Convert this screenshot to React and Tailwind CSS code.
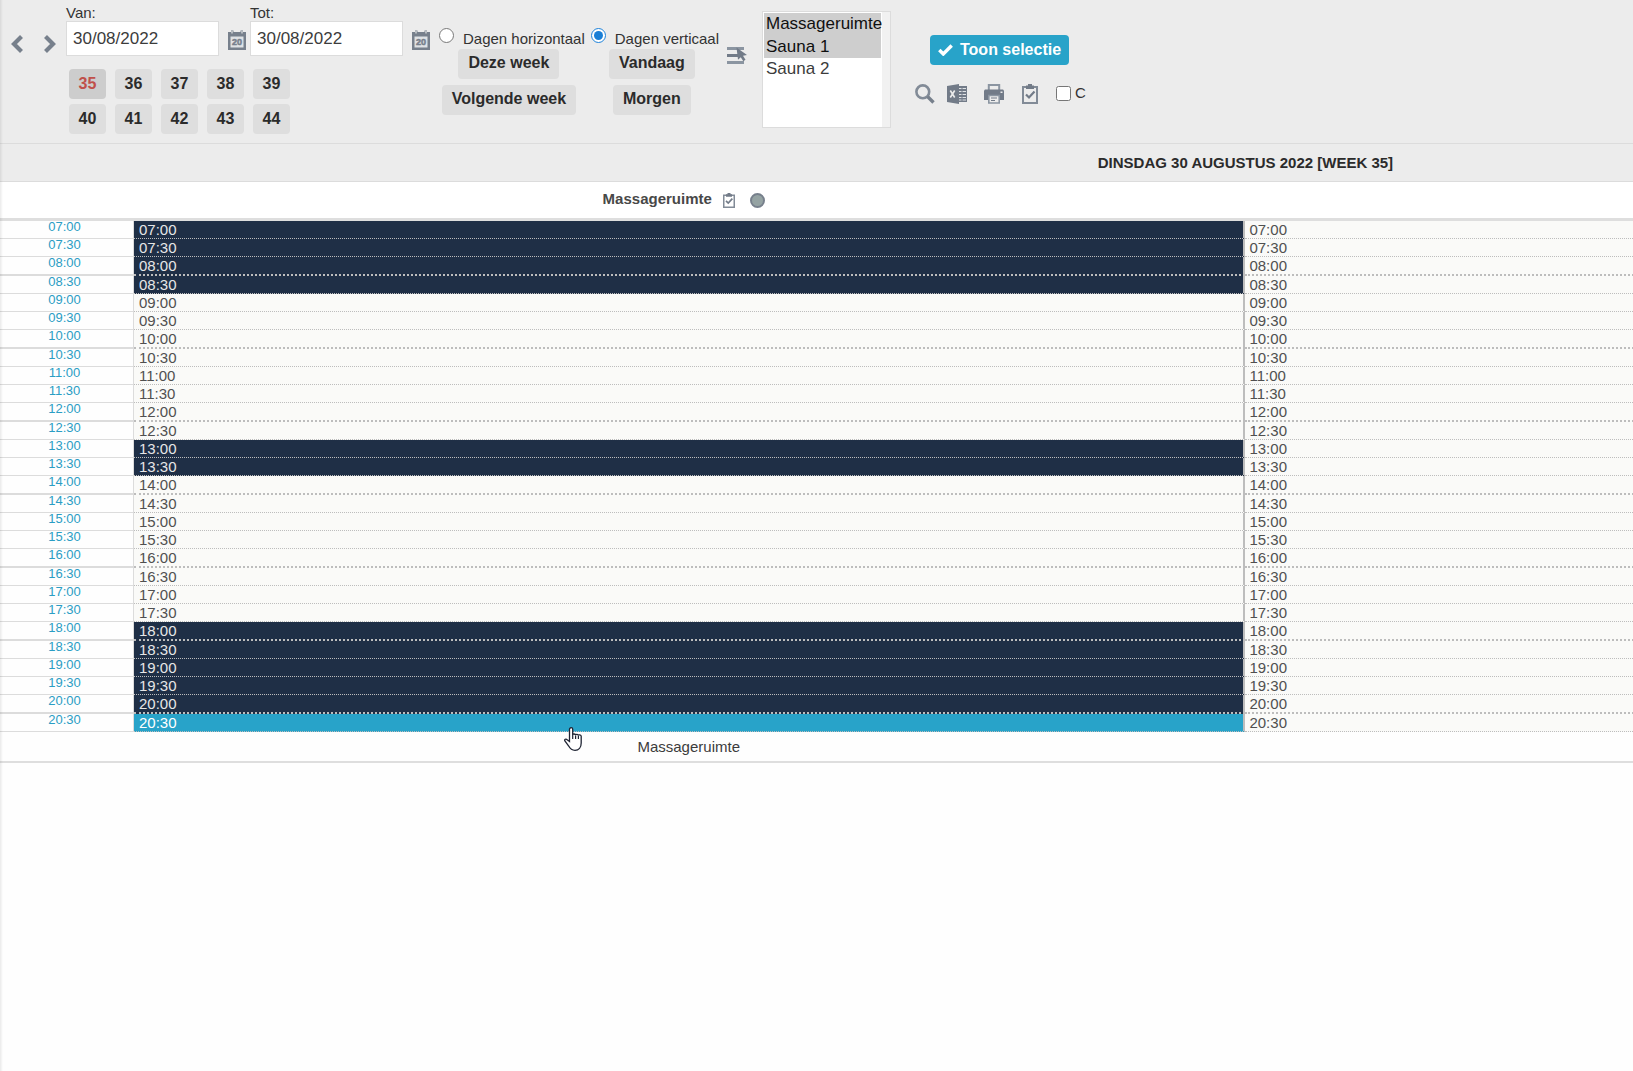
import React from "react";

const SLOTS = Array.from({ length: 28 }, (_, i) => {
  const hour = String(7 + Math.floor(i / 2)).padStart(2, "0");
  return `${hour}:${i % 2 ? "30" : "00"}`;
});
const CLOSED = new Set([0, 1, 2, 3, 12, 13, 22, 23, 24, 25, 26]);
const HOVERED = 27;
const WEEKS = [35, 36, 37, 38, 39, 40, 41, 42, 43, 44];

function Chevron({ flip }) {
  return (
    <svg viewBox="0 0 12 18" className="h-[18px] w-3" fill="none" stroke="#77808c" strokeWidth="4.2">
      <path d={flip ? "M1.5 1.5 9 9l-7.5 7.5" : "M10.5 1.5 3 9l7.5 7.5"} />
    </svg>
  );
}

function CalendarIcon() {
  return (
    <svg viewBox="0 0 18 20" className="h-5 w-[18px]">
      <path fill="#77808c" d="M0 2h3V.5h2.500V2h7V.5H15V2h3v18H0z" />
      <path fill="#ececec" d="M3 1h2v2.500H3zM13 1h2v2.500h-2z" opacity=".55" />
      <path fill="#dfe2e5" d="M2.500 6.500h13v11h-13z" />
      <text
        x="9"
        y="15.3"
        textAnchor="middle"
        fontSize="9"
        fontWeight="700"
        fill="#77808c"
        stroke="#77808c"
        strokeWidth=".5"
        fontFamily="Liberation Sans"
      >
        20
      </text>
    </svg>
  );
}

function ListIcon() {
  return (
    <svg viewBox="0 0 20 19" className="h-[19px] w-5">
      <path fill="#8b95a1" d="M0 1h17v3H0zM0 15h17v3H0z" />
      <path fill="#727b88" d="M0 8h12v3H0z" />
      <path fill="#727b88" d="M9.500 1.500 20 9l-4 .8 2.500 4-2.200 1.400-2.500-4-2.800 2.600z" />
    </svg>
  );
}

function SearchIcon() {
  return (
    <svg viewBox="0 0 20 20" className="size-5" fill="none">
      <circle cx="7.800" cy="7.800" r="6.400" stroke="#828b97" strokeWidth="2.600" />
      <path d="m12.500 12.500 6 6" stroke="#77808c" strokeWidth="3.400" />
    </svg>
  );
}

function ExcelIcon() {
  return (
    <svg viewBox="0 0 20 20" className="size-5">
      <path fill="#727b88" d="M0 2 12 0v20L0 18z" />
      <path fill="#727b88" d="M12 2h8v16h-8z" />
      <path
        stroke="#dfe2e5"
        fill="none"
        d="M12 4.500h2.500M15.500 4.500H19M12 7.500h2.500M15.500 7.500H19M12 10.500h2.500M15.500 10.500H19M12 13.500h2.500M15.500 13.500H19M12 16h2.500M15.500 16H19"
      />
      <path d="m3.300 6.500 4.400 7m0-7-4.400 7" stroke="#ececec" strokeWidth="1.600" />
    </svg>
  );
}

function PrintIcon() {
  return (
    <svg viewBox="0 0 20 20" className="size-5">
      <path d="M4.800 6V1h10.400v5" fill="none" stroke="#8b95a1" strokeWidth="2" />
      <path fill="#727b88" d="M1 5.500h18l1 1V16H0V6.500z" />
      <path fill="#ececec" stroke="#8b95a1" strokeWidth="1.600" d="M4.800 11.500h10.400V19H4.800z" />
      <path d="M7 14h6M7 16.500h4" stroke="#727b88" strokeWidth="1.200" />
      <path fill="#ececec" d="M16.500 7.500h2v1.500h-2z" />
    </svg>
  );
}

function ClipboardIcon({ className }) {
  return (
    <svg viewBox="0 0 16 20" className={className}>
      <path d="M1 3h14v16H1z" fill="none" stroke="#828b97" strokeWidth="2" />
      <path fill="#727b88" d="M4 1.500h2V0h4v1.500h2V5H4z" />
      <path d="m4 10.500 3 3 5.500-6" fill="none" stroke="#727b88" strokeWidth="2.200" />
    </svg>
  );
}

function IconButton({ label, children, className = "" }) {
  return (
    <button type="button" aria-label={label} className={`block shrink-0 cursor-pointer ${className}`}>
      {children}
    </button>
  );
}

function DateField({ id, label }) {
  return (
    <div className="flex items-end">
      <div>
        <label htmlFor={id} className="block text-[15px] leading-4">
          {label}
        </label>
        <input
          id={id}
          defaultValue="30/08/2022"
          className="block h-[35px] w-[153px] border border-[#dcdcdc] bg-white px-1.5 text-[17px] text-[#3c3c3c]"
        />
      </div>
      <IconButton label={`Kalender ${label}`} className="mb-1.5 ml-[9px]">
        <CalendarIcon />
      </IconButton>
    </div>
  );
}

function GreyButton({ children, active, className = "px-2.5 pb-0.5" }) {
  const colours = active ? "bg-[#cdcdcd] text-[#c0504a]" : "bg-[#dedede] text-[#2b2b2b]";
  return (
    <button type="button" className={`h-[30px] rounded text-base font-bold ${colours} ${className}`}>
      {children}
    </button>
  );
}

function ViewOption({ label, checked, children }) {
  return (
    <div>
      <label className="flex h-[21px] items-start gap-[9px] text-[15px]">
        <input type="radio" name="view" defaultChecked={checked} className="size-[15px] accent-[#1a7fd6]" />
        <span className="pt-0.5 leading-[18px] whitespace-nowrap">{label}</span>
      </label>
      <div className="flex flex-col items-center gap-1.5 pr-1.5">{children}</div>
    </div>
  );
}

function Toolbar() {
  return (
    <header className="flex items-start border-b border-[#dcdcdc] bg-[#ececec] pb-[9px]">
      <div className="flex w-[66px] shrink-0 gap-[21px] pt-[35px] pl-[11px]">
        <IconButton label="Vorige">
          <Chevron />
        </IconButton>
        <IconButton label="Volgende">
          <Chevron flip />
        </IconButton>
      </div>
      <div className="shrink-0 pt-[5px]">
        <div className="flex gap-1">
          <DateField id="from" label="Van:" />
          <DateField id="to" label="Tot:" />
        </div>
        <div className="mt-[13px] ml-[3px] grid w-max grid-cols-5 gap-x-[9px] gap-y-[5px]">
          {WEEKS.map((week) => (
            <GreyButton key={week} active={week === 35} className="w-[37px]">
              {week}
            </GreyButton>
          ))}
        </div>
      </div>
      <div className="ml-[9px] flex shrink-0 gap-1.5 pt-7">
        <ViewOption label="Dagen horizontaal">
          <GreyButton>Deze week</GreyButton>
          <GreyButton>Volgende week</GreyButton>
        </ViewOption>
        <ViewOption label="Dagen verticaal" checked>
          <GreyButton>Vandaag</GreyButton>
          <GreyButton>Morgen</GreyButton>
        </ViewOption>
      </div>
      <IconButton label="Alles selecteren" className="mt-[46px] ml-2">
        <ListIcon />
      </IconButton>
      <div className="mt-[11px] ml-[15px] shrink-0 border border-[#dcdcdc] bg-[#f1f1f1] pr-2">
        <select
          multiple
          aria-label="Ruimtes"
          defaultValue={["Massageruimte", "Sauna 1"]}
          className="block h-[115px] w-[119px] overflow-hidden bg-white p-px text-[17px] text-[#3c3c3c]"
        >
          <option className="h-[23px] px-0.5 pt-px leading-[22px]">Massageruimte</option>
          <option className="h-[22px] px-0.5 pt-px leading-[22px]">Sauna 1</option>
          <option className="h-[22px] px-0.5 pt-px leading-[22px]">Sauna 2</option>
        </select>
      </div>
      <div className="ml-6 shrink-0 pt-[35px]">
        <button
          type="button"
          className="ml-[15px] flex h-[30px] items-center gap-[7px] rounded bg-[#28a3c9] px-2 text-base font-bold text-white"
        >
          <svg viewBox="0 0 15 12" className="h-3 w-[15px]" fill="none" stroke="currentColor" strokeWidth="3.400">
            <path d="m1.300 6 4 4L13.700 1.500" />
          </svg>
          Toon selectie
        </button>
        <div className="mt-[19px] flex items-center">
          <IconButton label="Zoeken">
            <SearchIcon />
          </IconButton>
          <IconButton label="Excel" className="ml-3">
            <ExcelIcon />
          </IconButton>
          <IconButton label="Afdrukken" className="ml-[17px]">
            <PrintIcon />
          </IconButton>
          <IconButton label="Taken" className="ml-[18px]">
            <ClipboardIcon className="h-5 w-4" />
          </IconButton>
          <label className="ml-[18px] flex items-center gap-1 pb-0.5 text-[15px] leading-[18px]">
            <input type="checkbox" className="size-[15px]" />C
          </label>
        </div>
      </div>
    </header>
  );
}

function slotColour(i) {
  if (i === HOVERED) return "bg-[#28a3c9] text-white";
  if (CLOSED.has(i)) return "bg-[#1f2f46] text-[#e6e6e6]";
  return "bg-[#fafaf8] text-[#505050]";
}

function Schedule() {
  return (
    <table className="w-[calc(136px+136%)] table-fixed border-separate border-spacing-0">
      <colgroup>
        <col className="w-[134px]" />
        <col />
        <col />
      </colgroup>
      <thead>
        <tr className="h-[38px] bg-[#ececec] text-[15px]">
          <th className="border-b border-[#dcdcdc]" />
          <th colSpan={2} className="border-b border-[#dcdcdc] p-0 pt-0.5 font-bold text-[#2b2b2b]">
            DINSDAG 30 AUGUSTUS 2022 [WEEK 35]
          </th>
        </tr>
        <tr className="h-[39px] bg-white text-[15px]">
          <th className="border-b-3 border-[#dedede]" />
          <th className="border-b-3 border-[#dedede] p-0 pr-3 text-[#484848]">
            <span className="flex items-center justify-center">
              <span className="pb-0.5">Massageruimte</span>
              <ClipboardIcon className="ml-[11px] h-[15px] w-3" />
              <span className="ml-[15px] size-[15px] rounded-full border-2 border-[#77808c] bg-[#95a3a3]" />
            </span>
          </th>
          <th className="border-b-3 border-[#dedede]" />
        </tr>
      </thead>
      <tbody>
        {SLOTS.map((slot, i) => {
          const thick = i % 4 === 2;
          const line = thick ? "border-b-2" : "border-b";
          return (
            <tr key={slot} className={thick ? "h-[19px]" : "h-[18px]"}>
              <th
                className={`border-r border-[#dcdcdc] p-0 pr-1 align-top text-[13px] leading-[12px] font-normal text-[#2a9dc4] ${line}`}
              >
                {slot}
              </th>
              <td
                className={`border-r-2 border-b-[#bdbdbd] border-r-[#bdbdbd] p-0 pl-[5px] text-[15px] leading-[17px] [border-bottom-style:dotted] ${line} ${slotColour(i)}`}
              >
                {slot}
              </td>
              <td
                className={`border-b-[#bdbdbd] bg-[#fafaf8] p-0 pl-1 text-[15px] leading-[17px] text-[#505050] [border-bottom-style:dotted] ${line}`}
              >
                {slot}
              </td>
            </tr>
          );
        })}
      </tbody>
      <tfoot>
        <tr className="h-[31px] text-[15px] text-[#3c3c3c]">
          <td className="border-b-2 border-[#dedede] p-0" />
          <td className="border-b-2 border-[#dedede] p-0 pt-0.5 pr-0.5 text-center">Massageruimte</td>
          <td className="border-b-2 border-[#dedede] p-0" />
        </tr>
      </tfoot>
    </table>
  );
}

function HandCursor() {
  return (
    <svg viewBox="0 0 18 24" className="pointer-events-none absolute top-[727px] left-[564px] h-6 w-[18px]">
      <path
        d="M5.500 14.500V2.300a1.600 1.600 0 0 1 3.200 0V8c0-1.500 2.900-1.300 2.900.3 0-1.400 2.800-1.200 2.800.4 0-1.300 2.800-1 2.800.6V16c0 4.500-2.500 7.300-6.200 7.300-3.500 0-5-1.800-6.300-4.300L.9 14c-.8-1.600 1-2.500 2.300-1.300z"
        fill="#fff"
        stroke="#1f2433"
        strokeWidth="1.300"
      />
      <path d="M8.700 8v4M11.600 8.500V12M14.400 9v3" stroke="#1f2433" strokeWidth="1.200" />
    </svg>
  );
}

export default function App() {
  return (
    <main className="relative min-h-screen overflow-hidden bg-[#fefefe] font-['Liberation_Sans',Arial,sans-serif] text-[#333]">
      <Toolbar />
      <Schedule />
      <HandCursor />
      <div className="pointer-events-none absolute inset-y-0 left-0 w-[3px] bg-linear-to-r from-black/8 to-transparent" />
    </main>
  );
}
